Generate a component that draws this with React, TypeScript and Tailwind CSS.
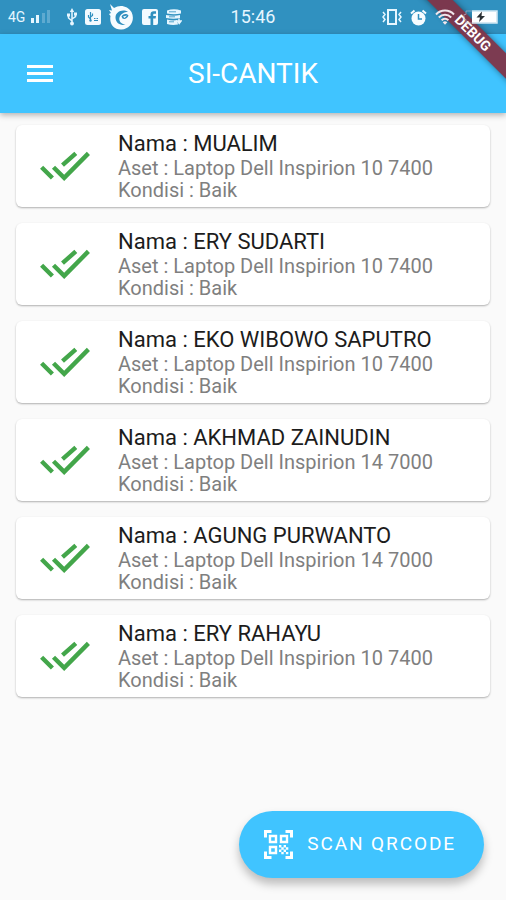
const assets = [
  { name: "MUALIM", asset: "Laptop Dell Inspirion 10 7400", condition: "Baik" },
  { name: "ERY SUDARTI", asset: "Laptop Dell Inspirion 10 7400", condition: "Baik" },
  { name: "EKO WIBOWO SAPUTRO", asset: "Laptop Dell Inspirion 10 7400", condition: "Baik" },
  { name: "AKHMAD ZAINUDIN", asset: "Laptop Dell Inspirion 14 7000", condition: "Baik" },
  { name: "AGUNG PURWANTO", asset: "Laptop Dell Inspirion 14 7000", condition: "Baik" },
  { name: "ERY RAHAYU", asset: "Laptop Dell Inspirion 10 7400", condition: "Baik" },
];

function SignalIcon() {
  return (
    <svg width="20" height="14" viewBox="0 0 20 14" fill="#e6f6ff" aria-hidden="true">
      <rect x="0" y="8" width="3" height="5" />
      <rect x="5" y="5" width="3" height="8" />
      <rect x="11" y="3" width="3" height="10" opacity="0.25" />
      <rect x="16" y="0" width="3" height="13" opacity="0.25" />
    </svg>
  );
}

function UsbIcon() {
  return (
    <svg width="10" height="18" viewBox="0 0 10 18" fill="none" stroke="#e6f6ff" strokeWidth="1.500" aria-hidden="true">
      <path d="M5 3v12M5 13L1.500 10V7M5 11l3.500-2.500V6" />
      <path d="M5 0l2.200 4H2.800zM0 5.500h3v3H0zM7 4.500h3v3H7z" fill="#e6f6ff" stroke="none" />
      <circle cx="5" cy="15.500" r="1.900" fill="#e6f6ff" stroke="none" />
    </svg>
  );
}

function BadgeIcon() {
  return (
    <svg width="16" height="16" viewBox="0 0 16 16" aria-hidden="true">
      <rect width="16" height="16" rx="2.500" fill="#f2faff" />
      <path d="M5.500 3v8M5.500 10L3.500 8V6M5.500 8L7.500 6.500V4.500" fill="none" stroke="#2f8fbf" strokeWidth="1.200" />
      <circle cx="5.500" cy="11.500" r="1.200" fill="#2f8fbf" />
      <path d="M9 9.500h1.500M11.500 9.500H13M9 11.500h4" stroke="#2f8fbf" strokeWidth="1" />
    </svg>
  );
}

function SwirlIcon() {
  return (
    <svg width="25" height="26" viewBox="0 0 25 26" aria-hidden="true">
      <path d="M1 0l4 4c6-4 14-2 17.500 4 4 8-1 17-10 17.500C5 26 0 20 1.500 12L0 10l2-1L0 6l3 .5z" fill="#f7fcff" />
      <path d="M19 8C14 4.500 6.500 7.500 6.500 13.500c0 5.500 5 8.500 10 7-4.500-.5-7-3.500-6-7C11.500 10 15 8 19 8z" fill="#2f8fbf" />
      <path d="M12.500 12.500c2-3 5-3 7-1-1 3-4 4-6 3z" fill="#2f8fbf" />
      <path d="M14 12.500l4-1-2.500 2.500z" fill="#f7fcff" />
    </svg>
  );
}

function FacebookIcon() {
  return (
    <svg width="16" height="16" viewBox="0 0 16 16" aria-hidden="true">
      <rect width="16" height="16" rx="2" fill="#f2faff" />
      <path d="M8.500 16V9.500H6.500V7h2V5.500C8.500 3.300 9.800 2.300 11.600 2.300H14v2.400h-1.500c-1 0-1.300.4-1.300 1.200V7H14l-.4 2.500h-2.400V16z" fill="#2f8fbf" />
    </svg>
  );
}

function StorageIcon() {
  return (
    <svg width="16" height="16" viewBox="0 0 16 16" aria-hidden="true">
      <path d="M1 1.500Q8-1 15 1.500v3Q8 6 1 4.500zM0 6q8 1.500 14 0v3Q8 10.500 0 9zM1 10.500q6 1.500 10 .5l1 4.500Q6 16.500 1 15z" fill="#e6f6ff" />
      <path d="M3 2.800h7M3 7.800h6M3 12.800h5" stroke="#2f8fbf" strokeWidth="0.800" />
      <path d="M13 9.500v3M11.500 12h3.500l-1.800 2.500z" stroke="#e6f6ff" strokeWidth="1.500" fill="#e6f6ff" />
    </svg>
  );
}

function VibrateIcon() {
  return (
    <svg width="20" height="16" viewBox="0 0 20 16" fill="none" stroke="#e6f6ff" aria-hidden="true">
      <rect x="6" y="1" width="8" height="14" strokeWidth="2" />
      <path d="M1 3l2 2.500L1 8l2 2.500L1 13M19 3l-2 2.500L19 8l-2 2.500 2 2.500" strokeWidth="1.500" />
    </svg>
  );
}

function AlarmIcon() {
  return (
    <svg width="17" height="17" viewBox="0 0 17 17" aria-hidden="true">
      <circle cx="8.500" cy="9.500" r="7" fill="#f7fcff" />
      <path d="M1 4.500L4.500 1.500M16 4.500L12.500 1.500" stroke="#f7fcff" strokeWidth="2" />
      <path d="M8.500 5v5H12" fill="none" stroke="#2f8fbf" strokeWidth="1.500" />
    </svg>
  );
}

function WifiIcon() {
  return (
    <svg width="20" height="16" viewBox="0 0 20 16" fill="none" stroke="#f1e6ec" strokeWidth="2" aria-hidden="true">
      <path d="M1 5.500C6 .3 14 .3 19 5.500M3.800 8.500c3.600-3.600 8.800-3.600 12.400 0M6.600 11.300c2-2 4.800-2 6.800 0" />
      <path d="M10 15.800l-2.300-2.600q2.300-1.800 4.600 0z" fill="#f1e6ec" stroke="none" />
    </svg>
  );
}

function BatteryIcon() {
  return (
    <svg width="35" height="14" viewBox="0 0 35 14" aria-hidden="true">
      <path d="M9 1h25v12H9" fill="none" stroke="#d3e9f3" strokeWidth="1.500" />
      <path d="M9 1H3v3.500H1v5h2V13h6" fill="none" stroke="#b8b4c4" strokeWidth="1" opacity="0.600" />
      <rect x="9" y="1.500" width="24.500" height="11" fill="#ffffff" />
      <path d="M19 1.500L13.500 7.500h3.500L16 12l6-6h-3.500z" fill="#2a2f33" />
    </svg>
  );
}

function DoubleCheckIcon() {
  return (
    <svg width="50" height="30" viewBox="0 0 50 30" fill="none" stroke="#43a64a" strokeWidth="4.400" aria-hidden="true">
      <path d="M1.600 16.200L12.400 27M13.500 16.200l10.700 10.700L48.400 2.400M22.500 14.200L35.800 2.400" />
    </svg>
  );
}

function QrScanIcon() {
  return (
    <svg width="29" height="29" viewBox="0 0 29 29" fill="none" stroke="#ffffff" aria-hidden="true">
      <path d="M1.500 7.500V1.500H7.500M21.500 1.500h6v6M27.500 21.500v6h-6M7.500 27.500h-6v-6" strokeWidth="3" />
      <path d="M6 6h6v6H6zM17 6h6v6h-6zM6 17h6v6H6z" strokeWidth="2.400" />
      <path d="M15 15h2.400v2.400H15zM19.600 15H22v2.400h-2.400zM17.300 17.300h2.400v2.400h-2.400zM21.900 17.300h2.400v2.400h-2.400zM15 19.600h2.400V22H15zM19.600 19.600H22V22h-2.400zM17.300 21.900h2.400v2.400h-2.400zM21.900 21.900h2.400v2.400h-2.400z" fill="#ffffff" stroke="none" />
    </svg>
  );
}

export default function App() {
  return (
    <div className="relative flex min-h-screen flex-col overflow-hidden bg-[#fafafa] font-[Roboto,sans-serif]">
      <div className="grid h-[34px] grid-cols-[1fr_auto_1fr] items-center bg-[#3091c0] px-2 text-[#e6f6ff]">
        <div className="flex items-center">
          <span className="mr-[6px] text-sm">4G</span>
          <SignalIcon />
          <div className="ml-4 flex items-center gap-2">
            <UsbIcon />
            <BadgeIcon />
            <SwirlIcon />
            <FacebookIcon />
            <StorageIcon />
          </div>
        </div>
        <span className="text-lg">15:46</span>
        <div className="relative z-30 flex items-center justify-end gap-2">
          <VibrateIcon />
          <AlarmIcon />
          <WifiIcon />
          <BatteryIcon />
        </div>
      </div>

      <header className="relative z-10 flex h-[79px] items-center bg-[#40c4ff] px-[27px] text-white shadow-[0_2px_6px_rgba(0,0,0,0.3)]">
        <button type="button" aria-label="Menu" className="flex w-[26px] flex-col gap-1">
          <span className="h-[3px] bg-white" />
          <span className="h-[3px] bg-white" />
          <span className="h-[3px] bg-white" />
        </button>
        <h1 className="flex-1 pr-[26px] text-center text-[28px] leading-8">SI-CANTIK</h1>
      </header>

      <ul className="flex flex-col gap-4 px-4 pt-3">
        {assets.map((item) => (
          <li
            key={item.name}
            className="flex items-center rounded-md bg-white py-[6px] pl-6 shadow-[0_1px_2px_rgba(0,0,0,0.3)]"
          >
            <DoubleCheckIcon />
            <div className="ml-7">
              <h2 className="text-[22px] leading-[26px] text-[#1c1c1c]">Nama : {item.name}</h2>
              <p className="text-xl leading-[22px] text-[#7f7f7f]">Aset : {item.asset}</p>
              <p className="text-xl leading-[22px] text-[#7f7f7f]">Kondisi : {item.condition}</p>
            </div>
          </li>
        ))}
      </ul>

      <button
        type="button"
        className="mt-auto mr-[22px] mb-[22px] flex h-[67px] items-center gap-[14px] self-end rounded-full bg-[#40c4ff] pr-7 pl-[25px] text-[19px] tracking-widest text-white shadow-[0_6px_10px_rgba(0,0,0,0.25)]"
      >
        <QrScanIcon />
        SCAN QRCODE
      </button>

      <div className="pointer-events-none absolute top-0 right-0 z-20 size-[100px] overflow-hidden">
        <div className="absolute top-[24px] right-[-37px] w-[140px] rotate-45 bg-[#7f3448]/95 text-center text-sm leading-[18px] font-bold text-white shadow-[0_0_6px_rgba(0,0,0,0.45)]">
          DEBUG
        </div>
      </div>
    </div>
  );
}
